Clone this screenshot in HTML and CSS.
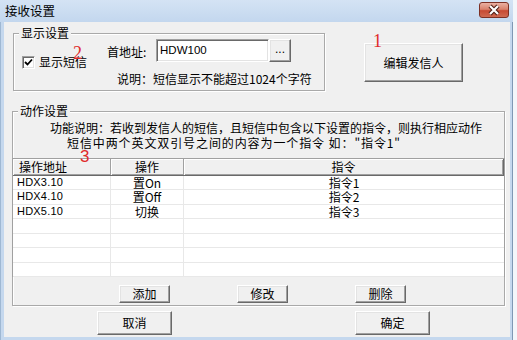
FILE: index.html
```html
<!DOCTYPE html>
<html lang="zh-CN">
<head>
<meta charset="utf-8">
<title>接收设置</title>
<link rel="stylesheet" href="styles.css">
</head>
<body>
<div class="frame">
  <div class="titlebar">
    <span class="title">接收设置</span>
    <span class="close">
      <svg width="30" height="16" viewBox="0 0 30 16">
        <path d="M11 4 L19 12 M19 4 L11 12" stroke="#4a1a12" stroke-width="4.2" fill="none"/>
        <path d="M11 4 L19 12 M19 4 L11 12" stroke="#fff" stroke-width="2.2" fill="none"/>
      </svg>
    </span>
  </div>
  <div class="client">
    <div class="top-row">
      <div class="group g1">
        <div class="group-title">显示设置</div>
        <div class="g1-body">
          <div class="check">
            <span class="checkbox"><svg width="9" height="9" viewBox="0 0 9 9"><polyline points="1,4 3.5,6.5 8,1.5" stroke="#000" stroke-width="1.8" fill="none"/></svg></span>
            <span class="check-label">显示短信</span>
          </div>
          <div class="fields">
            <div class="addr-row">
              <span class="addr-label">首地址:</span>
              <span class="input">HDW100</span>
              <span class="btn btn-dots">...</span>
            </div>
            <div class="note">说明：短信显示不能超过1024个字符</div>
          </div>
        </div>
      </div>
      <div class="btn btn-edit">编辑发信人</div>
    </div>

    <div class="group g2">
      <div class="group-title">动作设置</div>
      <div class="desc">
        <div class="d1">功能说明：若收到发信人的短信，且短信中包含以下设置的指令，则执行相应动作</div>
        <div class="d2">短信中两个英文双引号之间的内容为一个指令 如："指令1"</div>
      </div>
      <div class="list">
        <div class="lhead">
          <div class="hc c1">操作地址</div>
          <div class="hc c2">操作</div>
          <div class="hc c3">指令</div>
        </div>
        <div class="lrow"><div class="cell c1">HDX3.10</div><div class="cell c2">置On</div><div class="cell c3">指令1</div></div>
        <div class="lrow"><div class="cell c1">HDX4.10</div><div class="cell c2">置Off</div><div class="cell c3">指令2</div></div>
        <div class="lrow"><div class="cell c1">HDX5.10</div><div class="cell c2">切换</div><div class="cell c3">指令3</div></div>
        <div class="lrow"><div class="cell c1"></div><div class="cell c2"></div><div class="cell c3"></div></div>
        <div class="lrow"><div class="cell c1"></div><div class="cell c2"></div><div class="cell c3"></div></div>
        <div class="lrow"><div class="cell c1"></div><div class="cell c2"></div><div class="cell c3"></div></div>
        <div class="lrow"><div class="cell c1"></div><div class="cell c2"></div><div class="cell c3"></div></div>
      </div>
      <div class="g2-buttons">
        <span class="btn btn-small">添加</span>
        <span class="btn btn-small">修改</span>
        <span class="btn btn-small">删除</span>
      </div>
    </div>

    <div class="bottom-row">
      <span class="btn btn-big">取消</span>
      <span class="btn btn-big">确定</span>
    </div>
  </div>

  <span class="anno a1">1</span>
  <span class="anno a2">2</span>
  <span class="anno a3">3</span>
</div>
</body>
</html>
```
FILE: styles.css
```css
html, body {
  margin: 0;
  padding: 0;
}
body {
  background: #f3f6fa;
  font-family: "Noto Sans CJK SC", "Noto Sans", sans-serif;
  font-size: 12px;
  color: #000;
}
.frame {
  position: relative;
  width: 513px;
  height: 340px;
  background: #c5d8ee;
  box-shadow: inset -1px 0 #7f98b4, inset 1px 0 #9fb8d3;
  display: flex;
  flex-direction: column;
}
.titlebar {
  height: 22px;
  flex: none;
  display: flex;
  align-items: center;
  justify-content: space-between;
  padding: 0 4px 0 5px;
  background: linear-gradient(#d4e3f4, #c3d7ee);
}
.title {
  line-height: 14px;
  font-size: 12.5px;
}
.close {
  width: 30px;
  height: 16px;
  box-sizing: border-box;
  margin-top: -3px;
  border: 1px solid #7d3024;
  border-radius: 3px;
  background: linear-gradient(#eab0a2 0%, #d9826d 45%, #c74a33 55%, #cf6a52 100%);
  display: flex;
  align-items: center;
  justify-content: center;
}
.close svg {
  display: block;
  margin: -1px;
}
.client {
  margin: 0 3px 0 4px;
  height: 315px;
  background: #f0f0f0;
  display: flex;
  flex-direction: column;
}

/* group boxes */
.group {
  box-sizing: border-box;
  border: 1px solid #a9a9a9;
  box-shadow: inset 1px 1px #fff, 1px 1px #fff;
}
.group-title {
  width: max-content;
  margin: -7px 0 0 5px;
  padding: 0 2px;
  height: 12px;
  line-height: 12px;
  background: #f0f0f0;
}

.top-row {
  display: flex;
  align-items: flex-start;
}
.g1 {
  margin: 11px 0 0 9px;
  width: 312px;
  height: 58px;
}
.g1-body {
  display: flex;
  align-items: flex-start;
  padding-left: 8px;
}
.check {
  margin-top: 16px;
  display: flex;
  align-items: center;
  gap: 4px;
}
.checkbox {
  width: 13px;
  height: 13px;
  box-sizing: border-box;
  border: 1px solid;
  border-color: #a0a0a0 #fff #fff #a0a0a0;
  box-shadow: inset 1px 1px #696969, inset -1px -1px #e3e3e3;
  background: #fff;
  display: flex;
  align-items: center;
  justify-content: center;
}
.checkbox svg {
  display: block;
}
.check-label {
  line-height: 14px;
}
.fields {
  margin-left: 20px;
  display: flex;
  flex-direction: column;
}
.addr-row {
  display: flex;
  align-items: center;
  height: 23px;
}
.addr-label {
  width: 49px;
  line-height: 14px;
  margin-top: 2px;
}
.input {
  width: 113px;
  height: 23px;
  box-sizing: border-box;
  border: 1px solid;
  border-color: #a0a0a0 #fff #fff #a0a0a0;
  box-shadow: inset 1px 1px #696969, inset -1px -1px #e3e3e3;
  background: #fff;
  padding-left: 3px;
  line-height: 20px;
  font-family: "Liberation Sans", sans-serif;
  font-size: 11.5px;
}
.note {
  margin: 11px 0 0 10px;
  line-height: 12px;
  white-space: nowrap;
}

/* buttons */
.btn {
  box-sizing: border-box;
  display: flex;
  align-items: center;
  justify-content: center;
  background: #f0f0f0;
  border: 1px solid;
  border-color: #fff #696969 #696969 #fff;
  box-shadow: inset -1px -1px #a0a0a0, inset 1px 1px #e3e3e3;
  line-height: 14px;
}
.btn-dots {
  width: 22px;
  height: 23px;
  padding-bottom: 3px;
  font-family: "Liberation Sans", sans-serif;
}
.btn-edit {
  margin: 21px 0 0 39px;
  width: 99px;
  height: 39px;
}
.g2 {
  margin: 20px 0 0 8px;
  width: 493px;
  height: 195px;
  display: flex;
  flex-direction: column;
}
.desc {
  padding-top: 3px;
  white-space: nowrap;
}
.d1 {
  line-height: 15px;
  padding-left: 37px;
}
.d2 {
  line-height: 15px;
  padding-left: 54px;
  letter-spacing: 0.9px;
}

/* list view */
.list {
  margin: 8px -1px 0 -1px;
  border-left: 1px solid #a0a0a0;
  border-right: 1px solid #a0a0a0;
  background: #fff;
  display: flex;
  flex-direction: column;
}
.lhead {
  height: 18px;
  box-sizing: border-box;
  display: grid;
  grid-template-columns: 98px 73px 1fr;
  border-top: 1px solid #a0a0a0;
  border-bottom: 1px solid #696969;
  background: #f0f0f0;
}
.hc {
  border-right: 1px solid #a0a0a0;
  box-shadow: inset 1px 1px #fff, inset 0 -1px #a0a0a0;
  line-height: 16px;
  text-align: center;
}
.hc.c1 {
  text-align: left;
  padding-left: 6px;
}
.hc.c3 {
  border-right: 1px solid #696969;
  box-shadow: inset 1px 1px #fff, inset 0 -1px #a0a0a0, inset -1px 0 #a0a0a0;
}
.lrow {
  height: 14.43px;
  box-sizing: border-box;
  display: grid;
  grid-template-columns: 98px 73px 1fr;
  border-bottom: 1px solid #e8e8e8;
}
.cell {
  border-right: 1px solid #e8e8e8;
  line-height: 13px;
  text-align: center;
  white-space: nowrap;
}
.cell.c1 {
  text-align: left;
  padding-left: 4px;
  font-family: "Liberation Sans", sans-serif;
  font-size: 11px;
  letter-spacing: 0.2px;
}
.cell.c3 {
  border-right: none;
}
.g2-buttons {
  display: flex;
  margin-top: 8px;
  padding-left: 106px;
  gap: 67px;
}
.btn-small {
  width: 51px;
  height: 18px;
}
.bottom-row {
  display: flex;
  margin: 5px 0 0 93px;
  gap: 183px;
}
.btn-big {
  width: 75px;
  height: 24px;
}

/* red annotations */
.anno {
  position: absolute;
  color: #e02a2a;
  line-height: 1;
}
.a1 {
  left: 373px;
  top: 32px;
  font-family: "Liberation Serif", serif;
  font-size: 18px;
}
.a2 {
  left: 73px;
  top: 44px;
  font-family: "Liberation Serif", serif;
  font-size: 18px;
}
.a3 {
  left: 80px;
  top: 150px;
  font-family: "Liberation Sans", sans-serif;
  font-size: 17px;
  line-height: 14px;
}
```
